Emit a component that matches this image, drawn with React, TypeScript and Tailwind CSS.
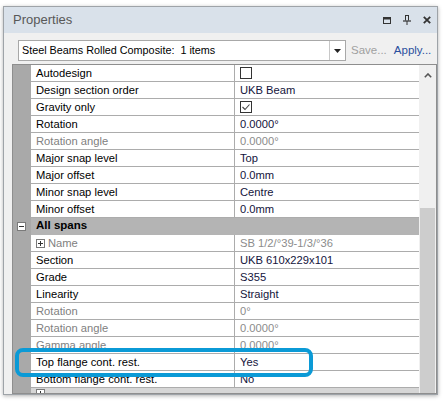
import React from "react";

type Row =
  | { kind: "prop"; name: string; value?: string; nameGray?: boolean; valueGray?: boolean; check?: "empty" | "checked"; plus?: boolean }
  | { kind: "header"; name: string };

const rows: Row[] = [
  { kind: "prop", name: "Autodesign", check: "empty" },
  { kind: "prop", name: "Design section order", value: "UKB Beam" },
  { kind: "prop", name: "Gravity only", check: "checked" },
  { kind: "prop", name: "Rotation", value: "0.0000°" },
  { kind: "prop", name: "Rotation angle", value: "0.0000°", nameGray: true, valueGray: true },
  { kind: "prop", name: "Major snap level", value: "Top" },
  { kind: "prop", name: "Major offset", value: "0.0mm" },
  { kind: "prop", name: "Minor snap level", value: "Centre" },
  { kind: "prop", name: "Minor offset", value: "0.0mm" },
  { kind: "header", name: "All spans" },
  { kind: "prop", name: "Name", value: "SB 1/2/°39-1/3/°36", nameGray: true, valueGray: true, plus: true },
  { kind: "prop", name: "Section", value: "UKB 610x229x101" },
  { kind: "prop", name: "Grade", value: "S355" },
  { kind: "prop", name: "Linearity", value: "Straight" },
  { kind: "prop", name: "Rotation", value: "0°", nameGray: true, valueGray: true },
  { kind: "prop", name: "Rotation angle", value: "0.0000°", nameGray: true, valueGray: true },
  { kind: "prop", name: "Gamma angle", value: "0.0000°", nameGray: true, valueGray: true },
  { kind: "prop", name: "Top flange cont. rest.", value: "Yes" },
  { kind: "prop", name: "Bottom flange cont. rest.", value: "No" },
];

function PlusBox({ minus }: { minus?: boolean }) {
  return (
    <svg width="9" height="9" viewBox="0 0 9 9" className="shrink-0">
      <rect x="0.5" y="0.5" width="8" height="8" fill="#fff" stroke="#7a7a7a" />
      <line x1="2" y1="4.5" x2="7" y2="4.5" stroke="#333" />
      {!minus && <line x1="4.5" y1="2" x2="4.5" y2="7" stroke="#333" />}
    </svg>
  );
}

function CheckBox({ checked }: { checked?: boolean }) {
  return (
    <svg width="12" height="12" viewBox="0 0 12 12">
      <rect x="0.5" y="0.5" width="11" height="11" fill="#fff" stroke="#333" />
      {checked && <path d="M2.5 6 L5 8.5 L9.5 3.5" fill="none" stroke="#444" strokeWidth="1.1" />}
    </svg>
  );
}

export default function App() {
  return (
    <div className="relative w-[445px] h-[402px] bg-white pt-[6px] pl-[3px] font-['Liberation_Sans',Arial,sans-serif] overflow-hidden">
      <div className="w-[435px] h-[389px] border border-[#9ea3a8] bg-[#f0f0f0] flex flex-col shadow-[0_1px_4px_rgba(0,0,0,0.3)]">
        {/* Title bar */}
        <div className="h-[26px] bg-[#d9e1ea] flex items-center justify-between pl-[9px] pr-[5px]">
          <span className="text-[13px] text-[#585858]">Properties</span>
          <div className="flex items-center gap-[12px] pr-[1px]">
            <svg width="8" height="7" viewBox="0 0 8 7">
              <rect x="0.5" y="0.5" width="7" height="6" fill="none" stroke="#333" />
              <rect x="0" y="0" width="8" height="2.5" fill="#333" />
            </svg>
            <svg width="8" height="10" viewBox="0 0 8 10">
              <path d="M2 0.5 H6 M2.5 0.5 V5.5 M5.5 0.5 V5.5" fill="none" stroke="#333" />
              <path d="M0 6 H8" stroke="#333" strokeWidth="1.2" />
              <path d="M4 6 V10" stroke="#333" />
            </svg>
            <svg width="8" height="8" viewBox="0 0 8 8">
              <path d="M0.8 0.8 L7.2 7.2 M7.2 0.8 L0.8 7.2" stroke="#333" strokeWidth="1.8" />
            </svg>
          </div>
        </div>
        {/* Toolbar */}
        <div className="h-[31px] bg-[#f0f0f0] flex items-start pt-[7px] pl-[14px]">
          <div className="w-[328px] h-[21px] bg-white border border-[#a8a8a8] flex items-center">
            <span className="flex-1 pl-[3px] text-[10.8px] text-black leading-none">Steel Beams Rolled Composite:&nbsp; 1 items</span>
            <div className="w-[16px] h-full border-l border-[#c8c8c8] flex items-center justify-center">
              <svg width="7" height="4" viewBox="0 0 7 4">
                <path d="M0 0 H7 L3.5 4 Z" fill="#222" />
              </svg>
            </div>
          </div>
          <div className="flex items-center h-[21px] ml-[5px] gap-[7px] text-[11.5px]">
            <span className="text-[#a0a0a0]">Save...</span>
            <span className="text-[#2a4f9e]">Apply...</span>
          </div>
        </div>
        {/* Grid */}
        <div className="relative ml-[8px] w-[425px] flex-1 min-h-0 border border-[#8e8e8e] bg-[#a9a9a9] flex overflow-hidden">
          <div className="flex-1 flex flex-col">
            {rows.map((r, i) =>
              r.kind === "header" ? (
                <div key={i} className="h-[17px] shrink-0 flex">
                  <div className="w-[18px] flex items-center justify-center pr-[1px]">
                    <PlusBox minus />
                  </div>
                  <div className="flex-1 bg-[#b4b4b4] border-b border-[#b4b4b4] flex items-center pl-[5px] text-[11.5px] font-bold text-black">
                    {r.name}
                  </div>
                </div>
              ) : (
                <div key={i} className="h-[17px] shrink-0 flex">
                  <div className="w-[18px]" />
                  <div className="w-[204px] bg-white border-b border-r border-[#acacac] flex items-center pl-[5px] text-[11.2px]">
                    {r.plus && (
                      <span className="mr-[3px] flex items-center">
                        <PlusBox />
                      </span>
                    )}
                    <span className={r.nameGray ? "text-[#808080]" : "text-black"}>{r.name}</span>
                  </div>
                  <div className="w-[184px] bg-white border-b border-[#acacac] flex items-center pl-[5px] text-[11.2px]">
                    {r.check ? (
                      <CheckBox checked={r.check === "checked"} />
                    ) : (
                      <span className={r.valueGray ? "text-[#8c8c8c]" : "text-[#14143c]"}>{r.value}</span>
                    )}
                  </div>
                </div>
              )
            )}
            <div className="h-[17px] shrink-0 flex">
              <div className="w-[18px]" />
              <div className="flex-1 bg-[#d6d6d6] flex items-start pl-[5px] pt-[1px]">
                <PlusBox />
              </div>
            </div>
          </div>
          {/* Scrollbar */}
          <div className="w-[17px] bg-[#f0f0f0] flex flex-col">
            <div className="h-[20px] flex items-center justify-center">
              <svg width="8" height="5" viewBox="0 0 8 5">
                <path d="M0.8 4.2 L4 1 L7.2 4.2" fill="none" stroke="#555" strokeWidth="1.6" />
              </svg>
            </div>
            <div className="h-[123px]" />
            <div className="flex-1 bg-[#cdcdcd] mx-[1px]" />
          </div>
        </div>
      </div>
      {/* Highlight */}
      <div className="absolute left-[15px] top-[348px] w-[298px] h-[29px] border-[4px] border-[#0b9ad6] rounded-[8px]" />
    </div>
  );
}
